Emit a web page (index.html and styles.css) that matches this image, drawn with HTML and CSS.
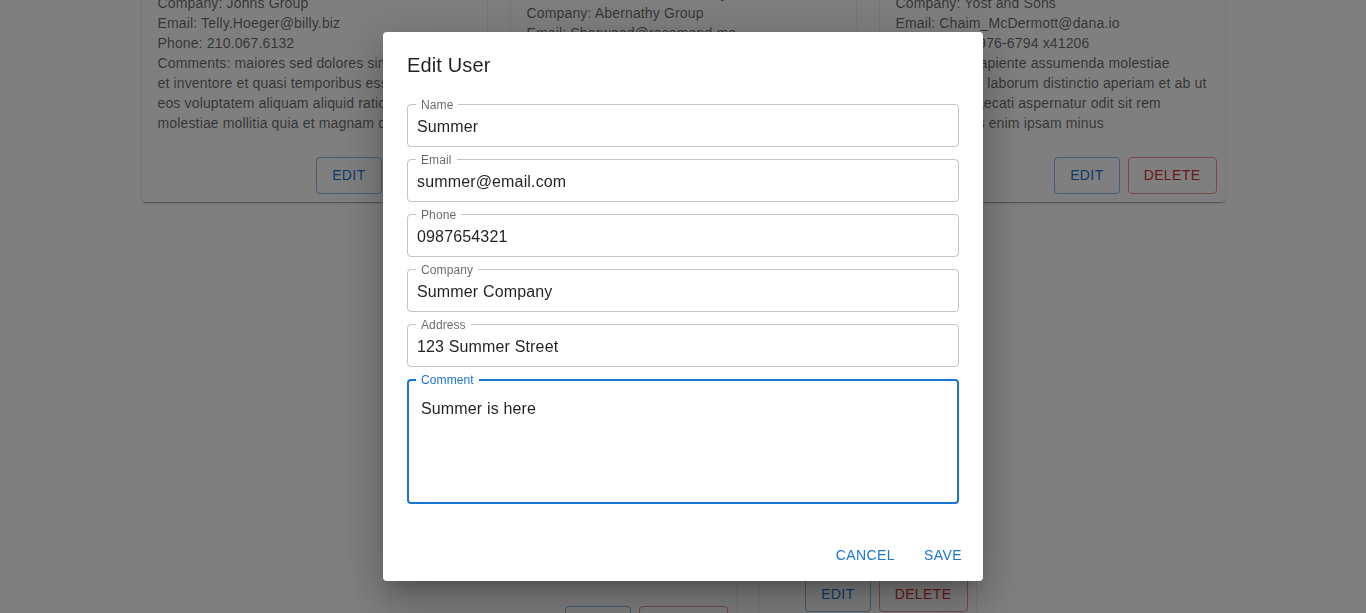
FILE: index.html
```html
<!DOCTYPE html>
<html lang="en">
<head>
<meta charset="utf-8">
<title>Users</title>
<link rel="stylesheet" href="styles.css">
</head>
<body>
<main class="page">
  <div class="cards">
    <article class="card">
      <div class="card-content">
        <h2 class="card-name">Kurtis Weissnat</h2>
        <p class="card-line">Address: Rex Trail, Howemouth</p>
        <p class="card-line">Company: Johns Group</p>
        <p class="card-line">Email: Telly.Hoeger@billy.biz</p>
        <p class="card-line">Phone: 210.067.6132</p>
        <p class="card-line">Comments: maiores sed dolores similique labore<br>et inventore et quasi temporibus esse sunt id et<br>eos voluptatem aliquam aliquid ratione corporis<br>molestiae mollitia quia et magnam dolor</p>
      </div>
      <div class="card-actions">
        <button class="btn btn-outlined btn-primary">Edit</button>
        <button class="btn btn-outlined btn-error">Delete</button>
      </div>
    </article>
    <article class="card">
      <div class="card-content">
        <h2 class="card-name">Nicholas Runolfsdottir V</h2>
        <p class="card-line">Address: Ellsworth Summit, Aliyaview</p>
        <p class="card-line">Company: Abernathy Group</p>
        <p class="card-line">Email: Sherwood@rosamond.me</p>
        <p class="card-line">Phone: 586.493.6943 x140</p>
        <p class="card-line">Comments: ut dolorum nostrum id quia aut est<br>fuga est inventore vel eligendi explicabo quis<br>consectetur aut occaecati repellat id natus quo est</p>
      </div>
      <div class="card-actions">
        <button class="btn btn-outlined btn-primary">Edit</button>
        <button class="btn btn-outlined btn-error">Delete</button>
      </div>
    </article>
    <article class="card">
      <div class="card-content">
        <h2 class="card-name">Glenna Reichert</h2>
        <p class="card-line">Address: Dayna Park, Bartholomebury</p>
        <p class="card-line">Company: Yost and Sons</p>
        <p class="card-line">Email: Chaim_McDermott@dana.io</p>
        <p class="card-line">Phone: (775)976-6794 x41206</p>
        <p class="card-line">Comments: sapiente assumenda molestiae<br>atque adipisci laborum distinctio aperiam et ab ut<br>omnis et occaecati aspernatur odit sit rem<br>expedita quas enim ipsam minus</p>
      </div>
      <div class="card-actions">
        <button class="btn btn-outlined btn-primary">Edit</button>
        <button class="btn btn-outlined btn-error">Delete</button>
      </div>
    </article>
    <article class="card">
      <div class="card-content">
        <h2 class="card-name">Clementina DuBuque</h2>
        <p class="card-line">Address: Kattie Turnpike, Lebsackbury</p>
        <p class="card-line">Company: Hoeger LLC</p>
        <p class="card-line">Email: Rey.Padberg@karina.biz</p>
        <p class="card-line">Phone: 024-648-3804</p>
        <p class="card-line">Comments: voluptate iusto quis nobis<br>reprehenderit ipsum amet nulla quia quas<br>dolores velit et non aut quia necessitatibus<br>nostrum quaerat nulla et accusamus nisi facilis</p>
      </div>
      <div class="card-actions">
        <button class="btn btn-outlined btn-primary">Edit</button>
        <button class="btn btn-outlined btn-error">Delete</button>
      </div>
    </article>
    <article class="card card-fit">
      <div class="card-content">
        <h2 class="card-name">Summer</h2>
        <p class="card-line">Address: 123 Summer Street</p>
        <p class="card-line">Company: Summer Company</p>
        <p class="card-line">Email: summer@email.com</p>
        <p class="card-line">Phone: 0987654321</p>
        <p class="card-line">Comments: Summer is here</p>
      </div>
      <div class="card-actions">
        <button class="btn btn-outlined btn-primary">Edit</button>
        <button class="btn btn-outlined btn-error">Delete</button>
      </div>
    </article>
  </div>
</main>

<div class="backdrop"></div>
<div class="dialog-container">
  <section class="dialog" role="dialog" aria-labelledby="dialog-title">
    <h2 class="dialog-title" id="dialog-title">Edit User</h2>
    <div class="dialog-content">
      <div class="field">
        <label class="field-label" for="f-name">Name</label>
        <input class="field-input" id="f-name" type="text" value="Summer">
      </div>
      <div class="field">
        <label class="field-label" for="f-email">Email</label>
        <input class="field-input" id="f-email" type="text" value="summer@email.com">
      </div>
      <div class="field">
        <label class="field-label" for="f-phone">Phone</label>
        <input class="field-input" id="f-phone" type="text" value="0987654321">
      </div>
      <div class="field">
        <label class="field-label" for="f-company">Company</label>
        <input class="field-input" id="f-company" type="text" value="Summer Company">
      </div>
      <div class="field">
        <label class="field-label" for="f-address">Address</label>
        <input class="field-input" id="f-address" type="text" value="123 Summer Street">
      </div>
      <div class="field field-focused">
        <label class="field-label" for="f-comment">Comment</label>
        <textarea class="field-textarea" id="f-comment" rows="4">Summer is here</textarea>
      </div>
    </div>
    <div class="dialog-actions">
      <button class="btn btn-text">Cancel</button>
      <button class="btn btn-text">Save</button>
    </div>
  </section>
</div>
</body>
</html>
```

FILE: styles.css
```css
html, body {
  margin: 0;
  padding: 0;
  background: #ffffff;
  font-family: "Liberation Sans", Arial, Helvetica, sans-serif;
  color: rgba(0, 0, 0, 0.87);
  overflow: hidden;
}

/* page scrolled down so the third row of users sits at the top */
.page {
  margin-top: -75px;
  padding-bottom: 40px;
}

.cards {
  display: flex;
  flex-wrap: wrap;
  justify-content: center;
  align-items: center;
  column-gap: 24px;
  row-gap: 172px;
}

.card {
  flex: 0 0 345px;
  max-width: 345px;
  background: #ffffff;
  border-radius: 4px;
  overflow: hidden;
  box-shadow: 0 2px 1px -1px rgba(0, 0, 0, 0.2), 0 1px 1px 0 rgba(0, 0, 0, 0.14), 0 1px 3px 0 rgba(0, 0, 0, 0.12);
}

.card-fit {
  flex-basis: 216px;
}

.card-content {
  padding: 16px;
}

.card-name {
  margin: 0;
  font-size: 24px;
  line-height: 32px;
  font-weight: 400;
  white-space: nowrap;
}

.card-line {
  margin: 0;
  font-size: 14px;
  line-height: 20px;
  letter-spacing: 0.15px;
  color: rgba(0, 0, 0, 0.6);
  white-space: nowrap;
}

.card-actions {
  display: flex;
  justify-content: flex-end;
  gap: 8px;
  padding: 8px;
}

.btn {
  box-sizing: border-box;
  min-width: 64px;
  margin: 0;
  font-family: "Liberation Sans", Arial, Helvetica, sans-serif;
  font-size: 14px;
  font-weight: 500;
  line-height: 24.5px;
  letter-spacing: 0.4px;
  text-transform: uppercase;
  background: transparent;
  border-radius: 4px;
  cursor: pointer;
}

.btn-outlined {
  padding: 5px 15px;
  border: 1px solid;
}

.btn-primary {
  color: #1976d2;
  border-color: rgba(25, 118, 210, 0.5);
}

.btn-error {
  color: #d32f2f;
  border-color: rgba(211, 47, 47, 0.5);
}

.btn-text {
  padding: 7px 8px 5px;
  border: 0;
  color: #1976d2;
}

/* modal */
.backdrop {
  position: fixed;
  inset: 0;
  background: rgba(0, 0, 0, 0.5);
}

.dialog-container {
  position: fixed;
  inset: 0;
  display: flex;
  align-items: center;
  justify-content: center;
}

.dialog {
  width: 600px;
  margin: 32px;
  background: #ffffff;
  border-radius: 4px;
  box-shadow: 0 11px 15px -7px rgba(0, 0, 0, 0.2), 0 24px 38px 3px rgba(0, 0, 0, 0.14), 0 9px 46px 8px rgba(0, 0, 0, 0.12);
}

.dialog-title {
  margin: 0;
  padding: 17px 24px 15px;
  font-size: 20px;
  line-height: 32px;
  font-weight: 500;
  letter-spacing: 0.15px;
  color: rgba(0, 0, 0, 0.87);
}

.dialog-content {
  display: flex;
  flex-direction: column;
  padding: 0 24px 20px;
}

.field {
  position: relative;
  margin: 8px 0 4px;
  border: 1px solid rgba(0, 0, 0, 0.23);
  border-radius: 4px;
}

.field-label {
  position: absolute;
  top: -6px;
  left: 8px;
  padding: 0 5px;
  background: #ffffff;
  font-size: 12px;
  line-height: 12px;
  letter-spacing: 0.1px;
  color: rgba(0, 0, 0, 0.6);
}

.field-input,
.field-textarea {
  display: block;
  box-sizing: border-box;
  width: 100%;
  margin: 0;
  border: 0;
  outline: none;
  background: transparent;
  font-family: "Liberation Sans", Arial, Helvetica, sans-serif;
  font-size: 16px;
  line-height: 23px;
  letter-spacing: 0.15px;
  color: rgba(0, 0, 0, 0.87);
}

.field-input {
  height: 41px;
  padding: 10px 9px 8px;
}

.field-textarea {
  height: 121px;
  padding: 15.5px 12px 13.5px;
  resize: none;
  overflow: hidden;
}

.field-focused {
  border: 2px solid #1976d2;
}

.field-focused .field-label {
  top: -7px;
  left: 7px;
  color: #1976d2;
}

.dialog-actions {
  display: flex;
  justify-content: flex-end;
  gap: 8px;
  padding: 8px;
}
```
